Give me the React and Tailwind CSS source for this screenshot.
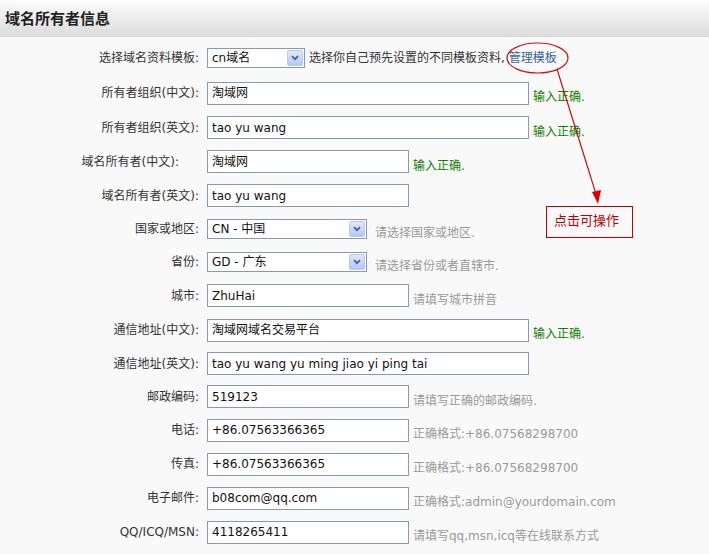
import React from "react";

const rows = [
  { label: "选择域名资料模板:", kind: "select", w: "w-[98px]", h: "h-[34.5px]", value: "cn域名", tail: "template" },
  { label: "所有者组织(中文):", kind: "input", w: "w-[322px]", h: "h-[35px]", value: "淘域网", ok: true },
  { label: "所有者组织(英文):", kind: "input", w: "w-[322px]", h: "h-[34px]", value: "tao yu wang", ok: true },
  { label: "域名所有者(中文):", kind: "input", w: "w-[202px]", h: "h-[34px]", value: "淘域网", ok: true, shift: true },
  { label: "域名所有者(英文):", kind: "input", w: "w-[202px]", h: "h-[34px]", value: "tao yu wang" },
  { label: "国家或地区:", kind: "select", w: "w-[160px]", h: "h-[32.5px]", value: "CN - 中国", hint: "请选择国家或地区." },
  { label: "省份:", kind: "select", w: "w-[160px]", h: "h-[33.5px]", value: "GD - 广东", hint: "请选择省份或者直辖市." },
  { label: "城市:", kind: "input", w: "w-[202px]", h: "h-[34.5px]", value: "ZhuHai", hint: "请填写城市拼音" },
  { label: "通信地址(中文):", kind: "input", w: "w-[322px]", h: "h-[34px]", value: "淘域网域名交易平台", ok: true },
  { label: "通信地址(英文):", kind: "input", w: "w-[322px]", h: "h-[33px]", value: "tao yu wang yu ming jiao yi ping tai" },
  { label: "邮政编码:", kind: "input", w: "w-[202px]", h: "h-[33px]", value: "519123", hint: "请填写正确的邮政编码." },
  { label: "电话:", kind: "input", w: "w-[202px]", h: "h-[34px]", value: "+86.07563366365", hint: "正确格式:+86.07568298700" },
  { label: "传真:", kind: "input", w: "w-[202px]", h: "h-[34px]", value: "+86.07563366365", hint: "正确格式:+86.07568298700" },
  { label: "电子邮件:", kind: "input", w: "w-[202px]", h: "h-[34px]", value: "b08com@qq.com", hint: "正确格式:admin@yourdomain.com" },
  { label: "QQ/ICQ/MSN:", kind: "input", w: "w-[202px]", h: "h-[34px]", value: "4118265411", hint: "请填写qq,msn,icq等在线联系方式" },
];

// xp style drop-down box
function FakeSelect({ w, value }) {
  return (
    <div className={`${w} h-[20px] flex items-center border border-[#7f9db9] bg-white pl-[4px] pr-[1px]`}>
      <span className="flex-1 text-[#111] leading-none">{value}</span>
      <span className="w-[16px] h-[16px] flex items-center justify-center rounded-[2px] border border-[#b9c9ef] bg-gradient-to-b from-[#dfe8fc] to-[#b3c6f4]">
        <svg width="8" height="6" viewBox="0 0 8 6">
          <path d="M1 1.2 L4 4.2 L7 1.2" fill="none" stroke="#4d6185" strokeWidth="1.8" />
        </svg>
      </span>
    </div>
  );
}

function Row({ r }) {
  return (
    <div className={`${r.h} flex items-center`}>
      <div className={`w-[200px] text-right text-[#333] ${r.shift ? "pr-[21px]" : "pr-[1px]"}`}>{r.label}</div>
      <div className="pl-[7px] flex items-center">
        {r.kind === "select" ? (
          <FakeSelect w={r.w} value={r.value} />
        ) : (
          <div className={`${r.w} h-[23px] flex items-center border border-[#7f9db9] bg-white pl-[4px] text-[#111]`}>
            {r.value}
          </div>
        )}
        {r.tail === "template" && (
          <span className="ml-[4px] text-[#333]">
            选择你自己预先设置的不同模板资料,<span className="ml-[4px] text-[#336699]">管理模板</span>
          </span>
        )}
        {r.ok && <span className="ml-[4px] mt-[8px] text-[#0d8000]">输入正确.</span>}
        {r.hint && (
          <span className={`${r.kind === "select" ? "ml-[8px]" : "ml-[4px]"} mt-[8px] text-[#9a9a9a]`}>{r.hint}</span>
        )}
      </div>
    </div>
  );
}

export default function App() {
  return (
    <div className="relative w-[709px] h-[554px] overflow-hidden bg-[#f9f9f9] text-[12px] font-['DejaVu_Sans','Noto_Sans_CJK_SC',sans-serif]">
      <div className="h-[37px] flex items-center pl-[5px] bg-gradient-to-b from-[#fdfdfd] to-[#dcdcdc] border-b border-[#d4d4d4]">
        <h3 className="text-[15px] font-bold text-[#222] font-['Noto_Sans_CJK_SC',sans-serif]">域名所有者信息</h3>
      </div>
      <div className="pt-[4px]">
        {rows.map((r, i) => (
          <Row key={i} r={r} />
        ))}
      </div>

      {/* red annotation */}
      <svg className="absolute left-0 top-0 pointer-events-none" width="709" height="554">
        <ellipse cx="537.5" cy="58" rx="30.5" ry="15" fill="none" stroke="#d01010" strokeWidth="1.2" />
        <line x1="557" y1="69" x2="596" y2="194" stroke="#d01010" strokeWidth="1.2" />
        <path d="M592 192 L601 190 L598 204 Z" fill="#e00000" />
      </svg>
      <div className="absolute left-[546px] top-[206px] w-[87px] h-[32px] border border-[#c00000] pl-[7px] pt-[3px] text-[13px] text-[#c00000] font-['Noto_Sans_CJK_SC',sans-serif]">
        点击可操作
      </div>
    </div>
  );
}
